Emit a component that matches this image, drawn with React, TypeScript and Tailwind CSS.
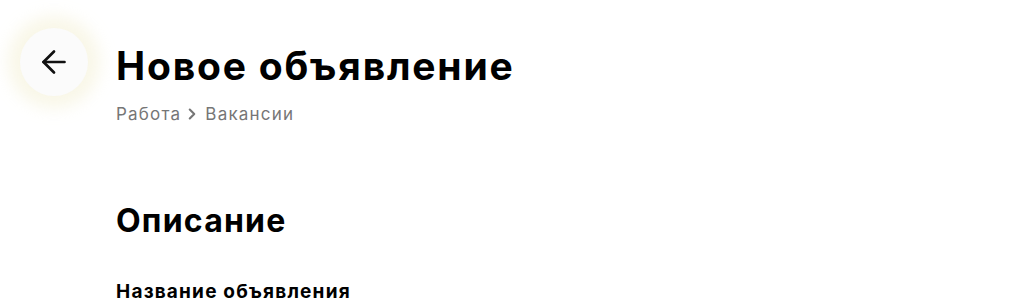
import { ArrowLeft, ChevronRight } from "lucide-react";

const App = () => {
  return (
    <div className="min-h-screen bg-white font-['Inter','Noto_Sans',sans-serif] text-black">
      {/* header */}
      <div className="flex items-start gap-7 pl-5 pt-7">
        <button className="flex h-[68px] w-[68px] shrink-0 items-center justify-center rounded-full bg-[#fbfbfb] shadow-[0_0_16px_12px_rgba(247,244,224,0.75)]">
          <ArrowLeft size={36} strokeWidth={1.8} className="text-[#111]" />
        </button>
        <div className="pt-[15px]">
          <h1 className="text-[39px] font-bold leading-[46px] tracking-[1.8px]">
            Новое объявление
          </h1>
          <div className="mt-[13px] flex items-center text-[17px] leading-6 tracking-[1.2px] text-[#767676]">
            <span>Работа</span>
            <ChevronRight size={18} strokeWidth={2.8} className="ml-[2px] mr-[4px]" />
            <span>Вакансии</span>
          </div>
        </div>
      </div>

      {/* description */}
      <div className="pl-[116px] pt-[75px]">
        <h2 className="text-[32px] font-bold leading-10 tracking-[1.2px]">Описание</h2>
        <div className="mt-[39px] text-[19px] font-bold leading-6 tracking-[1.2px]">
          Название объявления
        </div>
      </div>
    </div>
  );
};

export default App;
